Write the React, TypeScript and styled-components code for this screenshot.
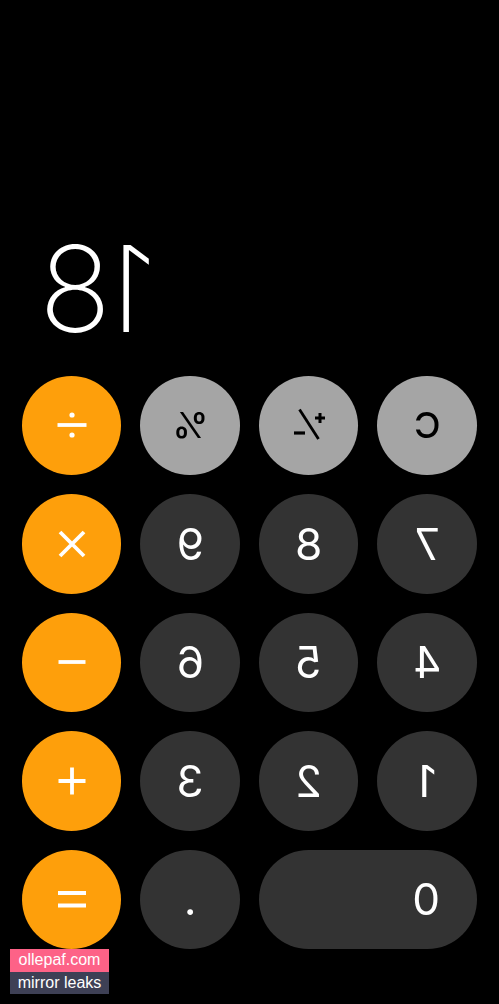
import React from "react";
import styled, { createGlobalStyle } from "styled-components";

const GlobalStyle = createGlobalStyle`
	html, body {
		margin: 0;
		padding: 0;
		background: #000;
	}
	#root {
		height: 1004px;
	}
`;

const Screen = styled.div`
	position: relative;
	width: 499px;
	height: 1004px;
	background: #000;
	overflow: hidden;
`;

// the whole calculator is shown mirrored
const Calculator = styled.div`
	height: 100%;
	display: flex;
	flex-direction: column;
	justify-content: flex-end;
	padding: 0 22px 55px;
	box-sizing: border-box;
	transform: scaleX(-1);
	font-family: Inter, "Liberation Sans", sans-serif;
`;

const Display = styled.div`
	text-align: right;
	color: #fff;
	font-size: 119px;
	font-weight: 200;
	line-height: 1;
	letter-spacing: 0;
	padding-right: 17px;
	margin-bottom: 27px;
`;

const Keypad = styled.div`
	display: grid;
	grid-template-columns: repeat(4, 1fr);
	grid-auto-rows: 99.5px;
	gap: 19px;
`;

type Kind = "fn" | "num" | "op";

const colors: Record<Kind, { bg: string; fg: string }> = {
	fn: { bg: "#a5a5a5", fg: "#000" },
	num: { bg: "#333333", fg: "#fff" },
	op: { bg: "#fe9f0b", fg: "#fff" },
};

const Key = styled.button<{ $kind: Kind; $wide?: boolean }>`
	grid-column: ${(p) => (p.$wide ? "span 2" : "span 1")};
	border: none;
	border-radius: 50px;
	background: ${(p) => colors[p.$kind].bg};
	color: ${(p) => colors[p.$kind].fg};
	font-family: inherit;
	font-size: ${(p) => (p.$kind === "fn" ? "36px" : "44px")};
	font-weight: ${(p) => (p.$kind === "fn" ? 500 : 400)};
	display: flex;
	align-items: center;
	justify-content: ${(p) => (p.$wide ? "flex-start" : "center")};
	padding: ${(p) => (p.$wide ? "0 0 0 37px" : "0")};
	line-height: 1;

	svg {
		display: block;
	}
`;

const Watermark = styled.div`
	position: absolute;
	left: 10px;
	top: 949px;
	display: flex;
	flex-direction: column;
	width: 99px;
	font-family: "Liberation Sans", Arial, sans-serif;
	font-size: 16px;
	color: #fff;
`;

const Tag = styled.span<{ $bg: string }>`
	display: block;
	height: 22.5px;
	line-height: 22px;
	text-align: center;
	background: ${(p) => p.$bg};
`;

const Icon = ({ children }: { children: React.ReactNode }) => (
	<svg width="40" height="40" viewBox="0 0 40 40" fill="none" stroke="currentColor" strokeWidth="3.8">
		{children}
	</svg>
);

const Divide = () => (
	<Icon>
		<path d="M5.5 20h29" />
		<circle cx="20" cy="10" r="2.6" fill="currentColor" stroke="none" />
		<circle cx="20" cy="30" r="2.6" fill="currentColor" stroke="none" />
	</Icon>
);

const Times = () => (
	<Icon>
		<path d="M8 8l24 24M32 8L8 32" />
	</Icon>
);

const Minus = () => (
	<Icon>
		<path d="M6.5 20h27" />
	</Icon>
);

const Plus = () => (
	<Icon>
		<path d="M6.5 20h27M20 6.5v27" />
	</Icon>
);

const Equals = () => (
	<Icon>
		<path d="M6 14h28M6 26.5h28" />
	</Icon>
);

const PlusMinus = () => (
	<Icon>
		<path d="M4 13h10M9 8v10" strokeWidth="3" />
		<path d="M29.5 4.5L10.5 34" strokeWidth="2.8" />
		<path d="M24 28h11" strokeWidth="3.2" />
	</Icon>
);

const keys: { id: string; label: React.ReactNode; kind: Kind; wide?: boolean }[] = [
	{ id: "c", label: "C", kind: "fn" },
	{ id: "pm", label: <PlusMinus />, kind: "fn" },
	{ id: "pct", label: "%", kind: "fn" },
	{ id: "div", label: <Divide />, kind: "op" },
	{ id: "7", label: "7", kind: "num" },
	{ id: "8", label: "8", kind: "num" },
	{ id: "9", label: "9", kind: "num" },
	{ id: "mul", label: <Times />, kind: "op" },
	{ id: "4", label: "4", kind: "num" },
	{ id: "5", label: "5", kind: "num" },
	{ id: "6", label: "6", kind: "num" },
	{ id: "sub", label: <Minus />, kind: "op" },
	{ id: "1", label: "1", kind: "num" },
	{ id: "2", label: "2", kind: "num" },
	{ id: "3", label: "3", kind: "num" },
	{ id: "add", label: <Plus />, kind: "op" },
	{ id: "0", label: "0", kind: "num", wide: true },
	{ id: "dot", label: ".", kind: "num" },
	{ id: "eq", label: <Equals />, kind: "op" },
];

const App = () => (
	<Screen>
		<GlobalStyle />
		<Calculator>
			<Display>18</Display>
			<Keypad>
				{keys.map((k) => (
					<Key key={k.id} $kind={k.kind} $wide={k.wide}>
						{k.label}
					</Key>
				))}
			</Keypad>
		</Calculator>
		<Watermark>
			<Tag $bg="#fd6287">ollepaf.com</Tag>
			<Tag $bg="#3e4055">mirror leaks</Tag>
		</Watermark>
	</Screen>
);

export default App;
